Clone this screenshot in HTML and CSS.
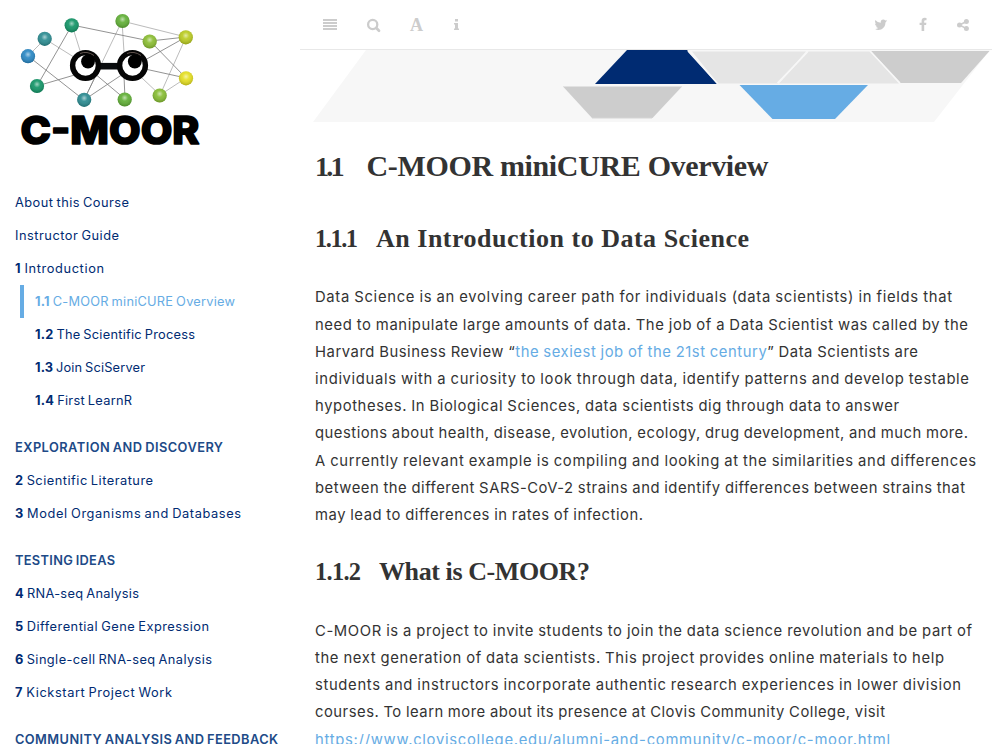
FILE: index.html
```html
<!DOCTYPE html>
<html lang="en">
<head>
<meta charset="utf-8">
<title>1.1 C-MOOR miniCURE Overview</title>
<link rel="stylesheet" href="styles.css">
</head>
<body>
<div class="book">
  <aside class="sidebar">
    <a class="logo" aria-label="C-MOOR">
      <svg width="220" height="160" viewBox="0 0 220 160">
        <defs>
          <radialGradient id="shine" cx=".5" cy=".38" r=".6"><stop offset="0" stop-color="#fff" stop-opacity=".6"/><stop offset=".4" stop-color="#fff" stop-opacity=".08"/><stop offset="1" stop-color="#000" stop-opacity=".2"/></radialGradient>
        </defs>
        <g stroke="#aaa" stroke-width=".8" fill="none">
          <path d="M72 25 82 57M45 39 77 59M45 39 28 56M122 21 186 37M122 21 84 100M122 21 124 52M186 37 160 95M186 78 160 95M160 95 142 78"/>
          <path stroke="#777" d="M72 25 37 86M72 25 150 41M150 41 186 37M150 41 186 78M37 86 78 74M28 56 84 100M84 100 96 75M84 100 126 72M125 99 94 73M125 99 124 76M186 37 145 60M186 78 145 69"/>
        </g>
        <g class="nodes">
          <circle cx="71.700" cy="25.300" r="7.100" fill="#119466"/><circle cx="44.700" cy="38.800" r="7.100" fill="#2b8c91"/>
          <circle cx="28" cy="56.200" r="7.100" fill="#2887c4"/><circle cx="37" cy="86" r="7.100" fill="#119466"/>
          <circle cx="84.200" cy="99.800" r="7.100" fill="#298a90"/><circle cx="122.500" cy="21" r="7.100" fill="#60af35"/>
          <circle cx="149.700" cy="41.500" r="7.100" fill="#8abd31"/><circle cx="185.800" cy="37.300" r="7.100" fill="#bacb20"/>
          <circle cx="186" cy="78.300" r="7.100" fill="#e5df20"/><circle cx="159.700" cy="95.500" r="7.100" fill="#86bc32"/>
          <circle cx="124.700" cy="99.500" r="7.100" fill="#60af35"/>
        </g>
        <g fill="url(#shine)">
          <circle cx="71.700" cy="25.300" r="7.100"/><circle cx="44.700" cy="38.800" r="7.100"/><circle cx="28" cy="56.200" r="7.100"/><circle cx="37" cy="86" r="7.100"/><circle cx="84.200" cy="99.800" r="7.100"/><circle cx="122.500" cy="21" r="7.100"/><circle cx="149.700" cy="41.500" r="7.100"/><circle cx="185.800" cy="37.300" r="7.100"/><circle cx="186" cy="78.300" r="7.100"/><circle cx="159.700" cy="95.500" r="7.100"/><circle cx="124.700" cy="99.500" r="7.100"/>
        </g>
        <path d="M98 66.200h22" stroke="#090b0d" stroke-width="6.600"/>
        <g fill="#fff" stroke="#050505" stroke-width="5.400"><circle cx="85.500" cy="65.500" r="12.900"/><circle cx="132.500" cy="65.500" r="12.900"/></g>
        <circle cx="88" cy="61.500" r="6.900"/><circle cx="134.800" cy="61.500" r="6.900"/>
        <path d="M80 53.500q7-3 14 2M127 53.500q7-3 14 2" stroke="#75645e" stroke-width=".8" fill="none"/>
        <text class="logo-text" x="20.500" y="143.500" textLength="179" lengthAdjust="spacingAndGlyphs">C-MOOR</text>
      </svg>
    </a>
    <nav class="summary">
      <a><span data-width="114">About this Course</span></a>
      <a><span data-width="104">Instructor Guide</span></a>
      <a><span data-width="89"><b>1</b> Introduction</span></a>
      <a class="sub active"><span data-width="200"><b>1.1</b> C-MOOR miniCURE Overview</span></a>
      <a class="sub"><span data-width="160"><b>1.2</b> The Scientific Process</span></a>
      <a class="sub"><span data-width="110"><b>1.3</b> Join SciServer</span></a>
      <a class="sub"><span data-width="97"><b>1.4</b> First LearnR</span></a>
      <h4><span data-width="208">EXPLORATION AND DISCOVERY</span></h4>
      <a><span data-width="138"><b>2</b> Scientific Literature</span></a>
      <a><span data-width="226"><b>3</b> Model Organisms and Databases</span></a>
      <h4><span data-width="100">TESTING IDEAS</span></h4>
      <a><span data-width="124"><b>4</b> RNA-seq Analysis</span></a>
      <a><span data-width="194"><b>5</b> Differential Gene Expression</span></a>
      <a><span data-width="197"><b>6</b> Single-cell RNA-seq Analysis</span></a>
      <a><span data-width="157"><b>7</b> Kickstart Project Work</span></a>
      <h4><span data-width="263">COMMUNITY ANALYSIS AND FEEDBACK</span></h4>
    </nav>
  </aside>
  <main class="body">
    <header class="toolbar">
      <svg width="300" height="49" viewBox="0 0 300 49" fill="#ccc">
        <path d="M23 19h14v2H23zM23 22h14v2H23zM23 25h14v2H23zM23 28h14v2H23z"/>
        <circle cx="72.700" cy="24.500" r="4.600" fill="none" stroke="#ccc" stroke-width="2.300"/><path d="m76.300 28 2.700 2.700" stroke="#ccc" stroke-width="2.700" stroke-linecap="round"/>
        <text class="font-icon" x="110" y="31" textLength="13" lengthAdjust="spacingAndGlyphs">A</text>
        <path d="M155 19h3v2.500h-3zM154 23h4v5.500h1V30h-5v-1.500h1v-4h-1z"/>
      </svg>
      <svg width="152" height="49" viewBox="0 0 152 49" fill="#ccc">
        <path d="M46.700 21.300q-.6.800-1.300 1.300c.2 4.300-3.100 7.500-7 7.500q-1.800 0-3.300-1 1.800 0 3.200-1-1.800-.3-2.300-1.900h1.100q-2.100-.6-2.200-2.800l1.200.3q-1.800-1.500-.8-3.700 2.100 2.600 5.500 2.700c-.6-3 2.700-4.200 4.600-2.300q1-.2 1.700-.7-.2.900-1.100 1.500z"/>
        <path d="M86.500 18v2.200h-1.300q-1 0-1 1v1.500h2.200l-.3 2.400h-1.900V31h-2.600v-5.900h-2v-2.400h2v-1.900c0-2 1.200-3 3-3z"/>
        <path d="m119.500 25 6.500-3.300M119.500 25l6.500 3.400" stroke="#ccc" stroke-width="1.600"/><circle cx="119.500" cy="25" r="2.500"/><circle cx="126.400" cy="21.500" r="2.500"/><circle cx="126.400" cy="28.500" r="2.500"/>
      </svg>
    </header>
    <svg class="banner" width="692" height="73" viewBox="300 50 692 73">
      <path fill="#f7f7f7" d="M366 50H990L934 122H313z"/>
      <path fill="#e5e5e5" d="M692 51.500h114l-28 32h-60z"/><path fill="#e5e5e5" d="M808.500 51.500h61.500l29 32H779z"/>
      <path fill="#cdcdcd" d="M871 51h118.500L961 83h-61z"/>
      <path fill="#002b72" d="M627 50h60l30 34H595z"/>
      <path fill="#cdcdcd" d="M563 86.500h119L652.500 118H592z"/><path d="M563 86.500h119M592 118.300h60" stroke="#e2e2e2"/>
      <path fill="#66ace4" d="M739.500 85H868l-33 34h-62.500z"/>
      <path d="m807.500 52-30 31M870 51l30 32M688 51l30 33" stroke="#f7f7f7" stroke-width="1.500"/>
    </svg>
    <article class="page">
      <h1><span class="number" data-width="29.500">1.1</span><span data-width="402">C-MOOR miniCURE Overview</span></h1>
      <section>
        <h2><span class="number" data-width="43">1.1.1</span><span data-width="373">An Introduction to Data Science</span></h2>
        <p>
          <span data-width="637">Data Science is an evolving career path for individuals (data scientists) in fields that</span>
          <span data-width="653">need to manipulate large amounts of data. The job of a Data Scientist was called by the</span>
          <span data-width="603">Harvard Business Review “<a>the sexiest job of the 21st century</a>” Data Scientists are</span>
          <span data-width="654">individuals with a curiosity to look through data, identify patterns and develop testable</span>
          <span data-width="584">hypotheses. In Biological Sciences, data scientists dig through data to answer</span>
          <span data-width="653">questions about health, disease, evolution, ecology, drug development, and much more.</span>
          <span data-width="661">A currently relevant example is compiling and looking at the similarities and differences</span>
          <span data-width="650">between the different SARS-CoV-2 strains and identify differences between strains that</span>
          <span data-width="328">may lead to differences in rates of infection.</span>
        </p>
      </section>
      <section>
        <h2><span class="number" data-width="46">1.1.2</span><span data-width="211">What is C-MOOR?</span></h2>
        <p>
          <span data-width="657">C-MOOR is a project to invite students to join the data science revolution and be part of</span>
          <span data-width="629">the next generation of data scientists. This project provides online materials to help</span>
          <span data-width="646">students and instructors incorporate authentic research experiences in lower division</span>
          <span data-width="570">courses. To learn more about its presence at Clovis Community College, visit</span>
          <span data-width="575"><a>https://www.cloviscollege.edu/alumni-and-community/c-moor/c-moor.html</a></span>
        </p>
      </section>
    </article>
  </main>
</div>
<script src="fit.js"></script>
</body>
</html>
```
FILE: styles.css
```css
* { box-sizing: border-box; }
body { margin: 0; height: 744px; overflow: hidden; background: #fff; font-family: Inter, "Liberation Sans", sans-serif; }
.book { display: flex; height: 744px; overflow: hidden; }
.sidebar { width: 300px; flex: none; color: #002b72; }
.logo { display: block; height: 186px; }
.logo svg { display: block; }
.logo-text { font: 800 38.5px Inter, sans-serif; stroke: #000; stroke-width: 1.6px; stroke-linejoin: round; }
.summary a, .summary h4 { display: flex; align-items: center; height: 33px; margin: 0; padding-left: 15px; font-size: 12.8px; line-height: 33px; font-weight: 380; word-spacing: -1px; white-space: nowrap; }
.summary a.sub { padding-left: 35px; }
.summary a.active { margin-left: 20px; padding-left: 11px; border-left: 4px solid #66ace4; color: #66ace4; }
.summary b { font-weight: 700; }
.summary h4 { height: 47px; padding-top: 14px; font-weight: 600; color: #204a87; }
[data-width] { display: inline-block; white-space: nowrap; }
.body { flex: 1; min-width: 0; color: #333; }
.toolbar { display: flex; justify-content: space-between; height: 50px; border-bottom: 1px solid #e8e8e8; }
.font-icon { font: bold 18px "Liberation Serif", serif; }
.banner { display: block; }
.page { padding: 0 15px; }
h1, h2 { display: flex; align-items: baseline; margin: 0; font-family: "Liberation Serif", serif; font-weight: 700; white-space: nowrap; }
h1 { gap: 22px; height: 86px; padding-top: 23px; font-size: 30px; line-height: 40px; }
h2 { gap: 18px; height: 74.4px; padding-top: 12px; font-size: 26px; line-height: 36px; }
.number { font-size: .94em; }
p { margin: 0; padding-top: 1px; font-size: 14.8px; line-height: 27.2px; font-weight: 390; word-spacing: -.5px; }
p > span { display: block; width: max-content; }
section + section { padding-top: 12.6px; }
section + section h2 { height: 75px; }
p a { color: #66ace4; }
```
FILE: fit.js
```js
// Track each line so that it sets to its intended measure.
document.fonts.ready.then(() => {
  document.querySelectorAll('[data-width]').forEach((line) => {
    const count = line.textContent.trim().length;
    const natural = line.getBoundingClientRect().width;
    const spacing = (Number(line.dataset.width) - natural) / (count - 1);
    line.style.letterSpacing = spacing + 'px';
    line.style.marginRight = -spacing + 'px';
  });
});
```
